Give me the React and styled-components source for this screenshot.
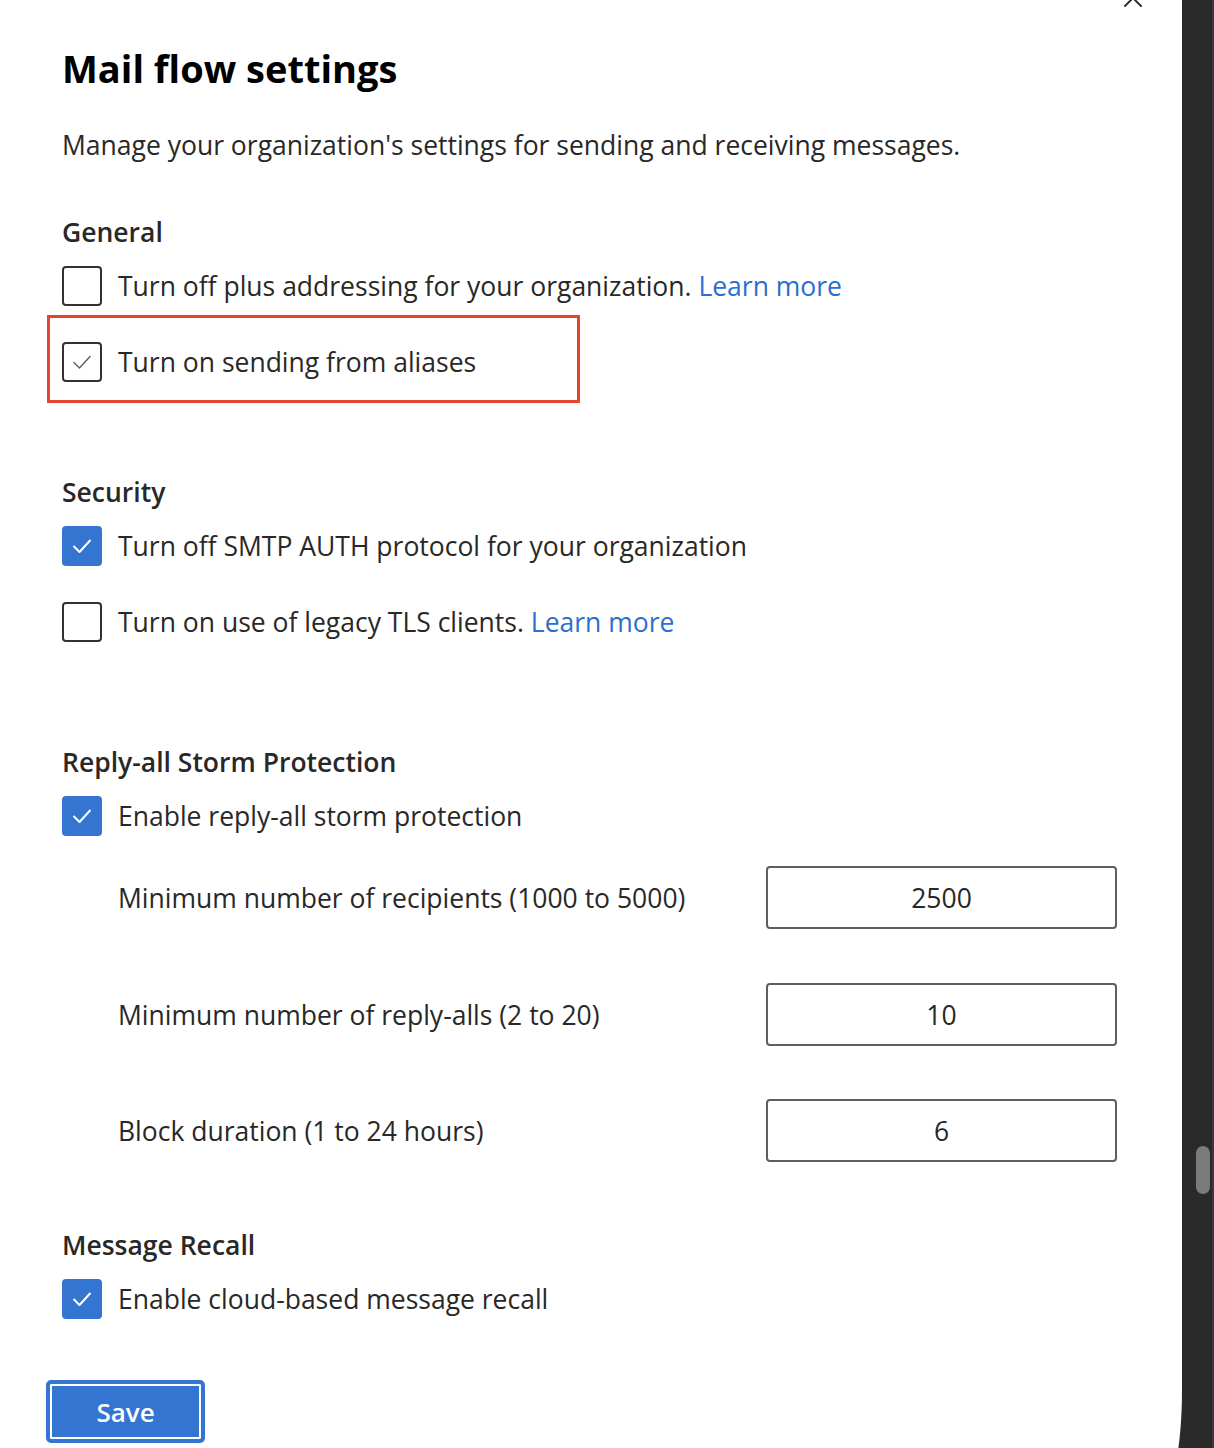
import styled, { createGlobalStyle } from 'styled-components';

const GlobalStyle = createGlobalStyle`
  html, body {
    margin: 0;
    padding: 0;
    background: #2b2b2b;
  }
  body {
    font-family: 'Open Sans', 'Noto Sans', sans-serif;
    color: #292827;
    overflow: hidden;
  }
`;

const Screen = styled.div`
  display: flex;
  width: 1214px;
  height: 1448px;
  overflow: hidden;
  background: #2b2b2b;
`;

const Panel = styled.div`
  position: relative;
  width: 1182px;
  height: 1500px;
  flex-shrink: 0;
  background: #ffffff;
  border-bottom-right-radius: 24px 110px;
  padding-left: 62px;
  box-sizing: border-box;
`;

const Rail = styled.div`
  position: relative;
  flex: 1;
  background: #2a2a2a;
  border-right: 2px solid #3a3a3a;
`;

const Thumb = styled.div`
  position: absolute;
  left: 14px;
  top: 1146px;
  width: 14px;
  height: 48px;
  border-radius: 7px;
  background: #7a7a7a;
`;

const CloseIcon = styled.svg`
  position: absolute;
  top: -14px;
  left: 1121px;
`;

const Title = styled.h1`
  margin: 42px 0 0;
  font-size: 38px;
  line-height: 52px;
  font-weight: 700;
  color: #000;
`;

const Description = styled.p`
  margin: 33px 0 0;
  font-size: 26.5px;
  line-height: 36px;
`;

const SectionTitle = styled.h2`
  margin: ${p => p.$gap}px 0 0;
  font-size: 26.5px;
  line-height: 36px;
  font-weight: 600;
`;

const Row = styled.label`
  display: flex;
  align-items: center;
  gap: 16px;
  height: 40px;
  margin-top: ${p => p.$gap}px;
  font-size: 26.5px;
`;

const Box = styled.span`
  width: 40px;
  height: 40px;
  box-sizing: border-box;
  border-radius: 4px;
  border: 2px solid ${p => (p.$checked === 'blue' ? '#3475d1' : '#323130')};
  background: ${p => (p.$checked === 'blue' ? '#3475d1' : '#fff')};
  display: flex;
  align-items: center;
  justify-content: center;
  flex-shrink: 0;
`;

const Link = styled.a`
  color: #2b6fcf;
  text-decoration: none;
`;

const Highlight = styled.div`
  width: 533px;
  box-sizing: border-box;
  margin: 9px 0 0 -15px;
  padding: 24px 12px 18px;
  border: 3px solid #e8432c;
  & > label {
    margin-top: 0;
  }
`;

const FieldRow = styled.div`
  display: flex;
  align-items: center;
  justify-content: space-between;
  width: 1055px;
  box-sizing: border-box;
  margin-top: ${p => p.$gap}px;
  padding-left: 56px;
`;

const FieldLabel = styled.span`
  font-size: 26.5px;
`;

const NumberInput = styled.div`
  width: 351px;
  height: 63px;
  box-sizing: border-box;
  border: 2px solid #605e5c;
  border-radius: 4px;
  display: flex;
  align-items: center;
  justify-content: center;
  font-size: 26.5px;
`;

const SaveButton = styled.button`
  display: block;
  margin: 61px 0 0 -16px;
  width: 159px;
  height: 63px;
  box-sizing: border-box;
  border: 4px solid #3475d1;
  border-radius: 5px;
  box-shadow: inset 0 0 0 2px #fff;
  background: #3475d1;
  color: #fff;
  font-family: inherit;
  font-size: 26px;
  font-weight: 600;
  padding: 0;
`;

const Check = ({ color }) => (
  <svg width="22" height="22" viewBox="0 0 22 22">
    <path
      d="M3 11.5 L8.5 17 L19 5.5"
      fill="none"
      stroke={color}
      strokeWidth={color === '#fff' ? 2 : 1.4}
      strokeLinecap="round"
      strokeLinejoin="round"
    />
  </svg>
);

const Checkbox = ({ state }) => (
  <Box $checked={state}>
    {state === 'blue' && <Check color="#fff" />}
    {state === 'grey' && <Check color="#605e5c" />}
  </Box>
);

export default function App() {
  return (
    <Screen>
      <GlobalStyle />
      <Panel>
        <CloseIcon width="24" height="24" viewBox="0 0 24 24">
          <path d="M4 4 L20 20 M20 4 L4 20" stroke="#323130" strokeWidth="2" strokeLinecap="round" />
        </CloseIcon>
        <Title>Mail flow settings</Title>
        <Description>Manage your organization's settings for sending and receiving messages.</Description>

        <SectionTitle $gap={51}>General</SectionTitle>
        <Row $gap={16}>
          <Checkbox />
          <span>
            Turn off plus addressing for your organization. <Link href="#">Learn more</Link>
          </span>
        </Row>
        <Highlight>
          <Row>
            <Checkbox state="grey" />
            <span>Turn on sending from aliases</span>
          </Row>
        </Highlight>

        <SectionTitle $gap={71}>Security</SectionTitle>
        <Row $gap={16}>
          <Checkbox state="blue" />
          <span>Turn off SMTP AUTH protocol for your organization</span>
        </Row>
        <Row $gap={36}>
          <Checkbox />
          <span>
            Turn on use of legacy TLS clients. <Link href="#">Learn more</Link>
          </span>
        </Row>

        <SectionTitle $gap={102}>Reply-all Storm Protection</SectionTitle>
        <Row $gap={16}>
          <Checkbox state="blue" />
          <span>Enable reply-all storm protection</span>
        </Row>
        <FieldRow $gap={30}>
          <FieldLabel>Minimum number of recipients (1000 to 5000)</FieldLabel>
          <NumberInput>2500</NumberInput>
        </FieldRow>
        <FieldRow $gap={54}>
          <FieldLabel>Minimum number of reply-alls (2 to 20)</FieldLabel>
          <NumberInput>10</NumberInput>
        </FieldRow>
        <FieldRow $gap={53}>
          <FieldLabel>Block duration (1 to 24 hours)</FieldLabel>
          <NumberInput>6</NumberInput>
        </FieldRow>

        <SectionTitle $gap={65}>Message Recall</SectionTitle>
        <Row $gap={16}>
          <Checkbox state="blue" />
          <span>Enable cloud-based message recall</span>
        </Row>

        <SaveButton>Save</SaveButton>
      </Panel>
      <Rail>
        <Thumb />
      </Rail>
    </Screen>
  );
}
